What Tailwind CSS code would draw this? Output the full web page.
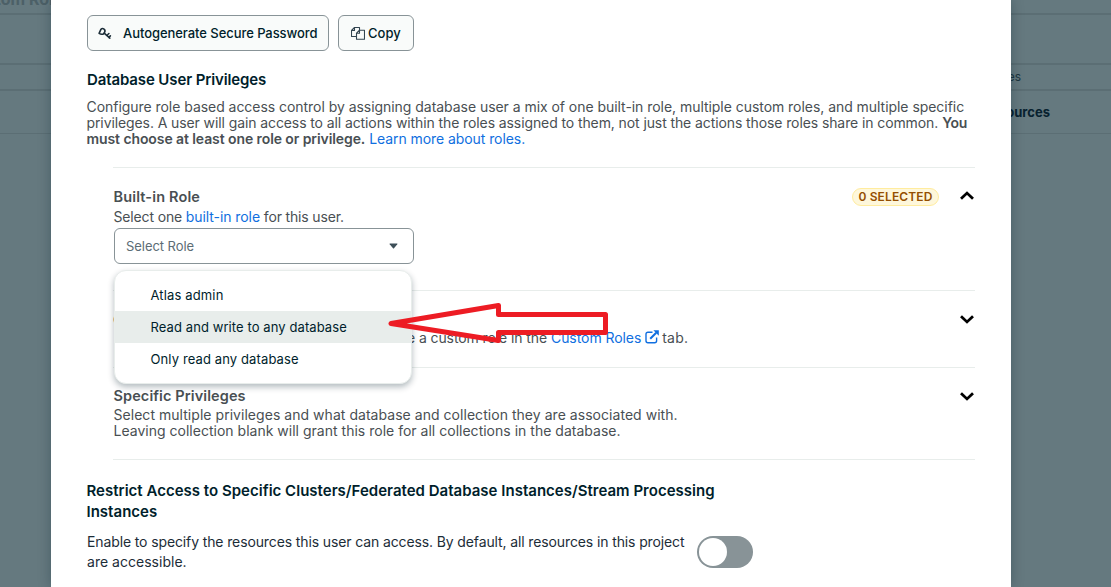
<!DOCTYPE html>
<html lang="en">
<head>
<meta charset="utf-8">
<title>Database User Privileges</title>
<script src="https://cdn.jsdelivr.net/npm/@tailwindcss/browser@4"></script>
</head>
<body class="relative h-[587px] w-[1111px] overflow-hidden bg-[#65797f] font-['Inter',sans-serif] text-sm text-[#494f53]">

<!-- Dimmed page behind the dialog -->
<div class="absolute inset-0 flex flex-col text-[#1c3540]">
  <div class="h-[15px] border-b-2 border-[#5b6e74]"><div class="-ml-[5px] -mt-[11px] text-base leading-5 font-bold whitespace-nowrap text-[#4c6067]">tom Roles</div></div>
  <div class="h-[50px] border-b-2 border-[#5b6e74]"></div>
  <div class="flex h-[26px] items-center border-b-2 border-[#5b6e74]"><span class="w-[1021px] text-right text-xs">Resources</span></div>
  <div class="flex h-[43px] items-center border-b border-[#5b6e74]"><span class="w-[1050px] text-right text-[13px] font-bold text-[#082230]">All Resources</span></div>
</div>

<!-- Dialog -->
<main class="absolute top-0 left-[51px] flex h-[587px] w-[960px] flex-col bg-white pr-9 pl-[35px] pt-[15px] shadow-[0_0_12px_rgba(0,30,43,0.3)]">
  <div class="flex h-9 shrink-0 gap-[9px] pl-px text-[13px] font-medium text-[#001e2b]">
    <button class="flex w-[242px] items-center rounded-md border border-[#889397] bg-[#f9fbfa] pl-[9px]">
      <svg class="mr-[11px] size-[15px]" viewBox="0 0 15 15" fill="none" stroke="#1c2d38" stroke-width="1.6" stroke-linecap="round" stroke-linejoin="round"><path d="M2.1 7.3 3.9 3.3Q5.4 1.9 7 3.1T7.6 6.3L6.4 8Q4.2 8.8 2.1 7.3ZM7.2 7.2l5.6 5M9.8 9.5l2.1-2M11.7 11.4l1.7-1.6"/></svg>
      <span class="whitespace-nowrap tracking-[-0.06px]">Autogenerate Secure Password</span>
    </button>
    <button class="flex w-[76px] items-center rounded-md border border-[#889397] bg-[#f9fbfa] pl-3">
      <svg class="mr-[3px] size-[14px]" viewBox="0 0 14 14" fill="none" stroke="#334550" stroke-width="1.1" stroke-linejoin="round"><path d="M5.5 10.5h-5v-6l3-3h5v2.7M3.5 1.5v3h-3M8.5 4.2h5v9h-8v-6zM8.5 4.2v3h-3"/></svg>
      <span>Copy</span>
    </button>
  </div>

  <h2 class="mt-[18px] pl-px text-[15px] leading-[21px] font-semibold tracking-[-0.12px] text-[#001e2b]">Database User Privileges</h2>

  <p class="mt-[9px] h-12 pl-[0.5px] leading-4 whitespace-nowrap">
    <span class="block tracking-[-0.044px]">Configure role based access control by assigning database user a mix of one built-in role, multiple custom roles, and multiple specific</span>
    <span class="block"><span class="tracking-[-0.1px]">privileges. A user will gain access to all actions within the roles assigned to them, not just the actions those roles share in common.</span> <b class="font-semibold tracking-[-0.23px]">You</b></span>
    <span class="block"><b class="font-semibold tracking-[-0.09px]">must choose at least one role or privilege.</b> <a class="tracking-[-0.07px] text-[#106fe0]">Learn more about roles.</a></span>
  </p>

  <div class="ml-[27px] mt-5 flex w-[862px] flex-col border-b border-[#e8edeb]">
    <section class="relative flex h-[123px] justify-between border-t border-[#e8edeb] pt-[19px]">
      <div>
        <h3 class="pl-[0.5px] text-[14.5px] leading-5 font-semibold tracking-[0.15px]">Built-in Role</h3>
        <p class="mt-[2px] pl-[0.5px] leading-4 tracking-[-0.15px]">Select one <a class="tracking-[-0.08px] text-[#106fe0]">built-in role</a> for this user.</p>
        <div class="ml-px mt-[3px] flex h-9 w-[300px] items-center justify-between rounded-md border border-[#889397] pr-[15px] pl-[11px] text-[13px] tracking-[-0.06px] text-[#5c6c75]">
          <span>Select Role</span>
          <svg class="h-[6px] w-[9px]" viewBox="0 0 9 6"><path d="M1 .5h7q.8 0 .3.7L5 5.3q-.5.6-1 0L.7 1.2Q.2.5 1 .5Z" fill="#3d4f58"/></svg>
        </div>
      </div>
      <div class="flex h-5 items-center">
        <span class="flex h-[18px] w-[87px] items-center justify-center rounded-full border border-[#ffec9e] bg-[#fef7db] text-xs font-semibold tracking-[0.12px] text-[#944f01]">0 SELECTED</span>
        <svg class="mr-px mb-[3px] ml-[21px] h-[9px] w-[14px]" viewBox="0 0 14 9" fill="none" stroke="#000" stroke-width="2.8"><path d="m1 7.7 6-5.6 6 5.6"/></svg>
      </div>

      <!-- Role menu -->
      <ul class="absolute top-[102px] left-px z-10 h-[114px] w-[298px] rounded-xl border border-[#e8edeb] bg-white pt-[8px] text-[13px] text-[#001e2b] shadow-[0_3px_6px_rgba(0,30,43,0.3)]">
        <li class="flex h-8 items-center pl-[35.5px] tracking-[0.14px]">Atlas admin</li>
        <li class="flex h-8 items-center bg-[#e8edeb] pl-[35.5px] tracking-[0.09px]">Read and write to any database</li>
        <li class="flex h-8 items-center pl-[35.5px] tracking-[0.12px]">Only read any database</li>
      </ul>

      <!-- Pointer arrow -->
      <svg class="absolute top-[132px] left-[273px] z-20 h-[46px] w-[224px]" viewBox="0 0 224 46" fill="none" stroke="#ed1c24" stroke-width="5" stroke-linejoin="round"><path d="M5 23.5 112.5 5.5v9h107v18h-107v8z"/></svg>
    </section>

    <section class="flex h-[77px] justify-between border-t border-[#e8edeb] pt-[19px]">
      <div>
        <h3 class="text-[14.5px] leading-5 font-semibold tracking-[0.1px]">Custom Roles</h3>
        <p class="flex leading-4 whitespace-nowrap"><span class="w-[434px] text-right tracking-[-0.1px]">Select your custom role(s). You can create a custom role in the</span><a class="ml-[4px] flex items-center tracking-[-0.07px] text-[#106fe0]">Custom Roles<svg class="mb-[2px] ml-[4px] size-[14px]" viewBox="0 0 14 14" fill="none" stroke="#106fe0" stroke-width="1.4"><path d="M7.5 2.2H3Q1 2.2 1 4.2v6.6q0 2 2 2h6.6q2 0 2-2V7.5"/><path d="m5.2 8.8 6-6" stroke-width="2"/><path d="M8.4.3h5.4v5.4z" fill="#106fe0" stroke="none"/></svg></a><span class="ml-[3px] tracking-[0.2px]">tab.</span></p>
      </div>
      <svg class="mr-px mt-[5px] h-[9px] w-[14px]" viewBox="0 0 14 9" fill="none" stroke="#000" stroke-width="2.8"><path d="m1 1.3 6 5.6 6-5.6"/></svg>
    </section>

    <section class="flex h-[92px] justify-between border-t border-[#e8edeb] pt-[18px]">
      <div>
        <h3 class="pl-[0.5px] text-[14.5px] leading-5 font-semibold tracking-[0.1px]">Specific Privileges</h3>
        <p class="mt-px pl-[0.5px] leading-4 whitespace-nowrap"><span class="block tracking-[0.04px]">Select multiple privileges and what database and collection they are associated with.</span><span class="block tracking-[0.012px]">Leaving collection blank will grant this role for all collections in the database.</span></p>
      </div>
      <svg class="mr-px mt-[6px] h-[9px] w-[14px]" viewBox="0 0 14 9" fill="none" stroke="#000" stroke-width="2.8"><path d="m1 1.3 6 5.6 6-5.6"/></svg>
    </section>
  </div>

  <h2 class="mt-5 pl-[0.5px] text-[15px] leading-[21px] font-semibold whitespace-nowrap tracking-[0.015px] text-[#001e2b]">Restrict Access to Specific Clusters/Federated Database Instances/Stream Processing<br>Instances</h2>
  <div class="mt-[10px] flex h-10 pl-px text-[#1c2d38]">
    <p class="w-[610px] leading-5 whitespace-nowrap"><span class="block tracking-[-0.12px]">Enable to specify the resources this user can access. By default, all resources in this project</span><span class="block tracking-[0.02px]">are accessible.</span></p>
    <div class="mt-1 flex h-8 w-14 items-center rounded-full bg-[#889397] pl-[2px]"><div class="size-7 rounded-full bg-white"></div></div>
  </div>
</main>
</body>
</html>
